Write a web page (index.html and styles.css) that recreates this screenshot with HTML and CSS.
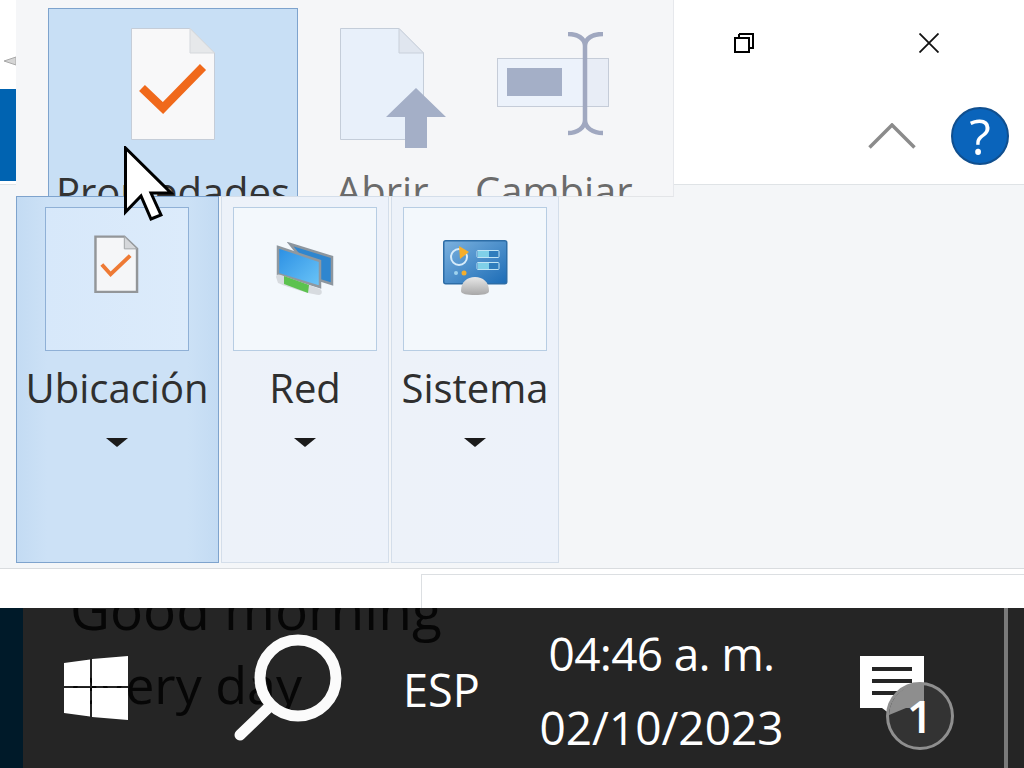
FILE: index.html
```html
<!DOCTYPE html>
<html lang="es">
<head>
<meta charset="utf-8">
<title>Propiedades</title>
<link rel="stylesheet" href="styles.css">
</head>
<body>
<div class="screen">
  <main class="window">
    <header class="header">
      <div class="rail">
        <svg class="rail-arrow" width="16" height="12" viewBox="0 0 16 12"><path d="M4 6 16 2V10Z" fill="#d5d5d5" stroke="#a9a9a9"/></svg>
        <div class="rail-tab"></div>
      </div>
      <div class="header-main">
        <div class="titlebar">
          <svg class="restore" width="20" height="20" viewBox="0 0 20 20"><path d="M5 1H19V15H15M1 5H15V19H1Z M5 1V5 M15 5" fill="none" stroke="#000" stroke-width="2"/></svg>
          <svg class="close" width="20" height="20" viewBox="0 0 20 20"><path d="M.5.5 19.5 19.5M19.5.5.5 19.5" fill="none" stroke="#111" stroke-width="1.800"/></svg>
        </div>
        <div class="tabbar">
          <svg class="caret" width="48" height="26" viewBox="0 0 48 26"><path d="M1.500 24.500 24 2 46.500 24.500" fill="none" stroke="#8b8b8b" stroke-width="3.500"/></svg>
          <svg class="help" width="58" height="58" viewBox="0 0 58 58"><circle cx="29" cy="29" r="28" fill="#0a64bb" stroke="#104f8f" stroke-width="2"/><text class="help-mark" x="29" y="48" text-anchor="middle">?</text></svg>
        </div>
      </div>
    </header>
    <section class="ribbon"></section>
    <footer class="statusbar"><div class="status-panel"></div></footer>

    <div class="menu-top">
      <div class="big-btn big-btn-active">
        <svg width="84" height="112" viewBox="0 0 84 112"><path d="M.5.5H59L83.500 25V111.500H.5Z" fill="#f8f8f9" stroke="#c5cdd8"/><path d="M59 .5V25H83.500Z" fill="#e6e8ea" stroke="#d5d8dc"/><path d="M11 60 32 80 72 39" fill="none" stroke="#f0691b" stroke-width="8.500"/></svg>
        <span class="big-label">Propiedades</span>
      </div>
      <div class="big-btn big-btn-open">
        <svg class="open-icon" width="108" height="122" viewBox="0 0 108 122"><path d="M.5.5H59L83.500 25V111.500H.5Z" fill="#e8f0fa" stroke="#c4cdd9"/><path d="M59 .5V25H83.500Z" fill="#e0e6ef" stroke="#c9d0da"/><path d="M46 89 76 60 106 89H87V120H65V89Z" fill="#a4afc7"/></svg>
        <span class="big-label big-label-off">Abrir</span>
      </div>
      <div class="big-btn big-btn-rename">
        <svg class="rename-icon" width="114" height="104" viewBox="0 0 114 104"><rect x=".5" y="26.500" width="111" height="48" fill="#e8edf6" stroke="#c5ccd8"/><rect x=".5" y="26.500" width="88" height="48" fill="#ecf2fb" stroke="#c5ccd8"/><rect x="10" y="36" width="55" height="28" fill="#a4afc7"/><path d="M71 2C80 2 88 6 88 14V88C88 96 80 101 71 101M106 2C96 2 88 6 88 14M88 88C88 96 96 101 106 101" fill="none" stroke="#a0a8c0" stroke-width="4.500"/></svg>
        <span class="big-label big-label-off">Cambiar</span>
      </div>
    </div>

    <div class="menu-bottom">
      <div class="tile tile-active">
        <div class="tile-box tile-box-active">
          <svg class="tile-icon tile-icon-doc" width="45" height="59" viewBox="0 0 46 60"><path d="M1.500 1.500H31L44 14V58H1.500Z" fill="#f5f6f8" stroke="#939699" stroke-width="2.500"/><path d="M31 1.500V14H44Z" fill="#d5d7da" stroke="#a2a5a8"/><path d="M8 30 17 40 37 21" fill="none" stroke="#ee7a35" stroke-width="4"/></svg>
        </div>
        <span class="tile-label">Ubicación</span>
        <span class="tile-arrow"></span>
      </div>
      <div class="tile tile-red">
        <div class="tile-box">
          <svg class="tile-icon" width="58" height="55" viewBox="0 0 58 55">
            <defs><linearGradient id="screen" x1="0" y1="0" x2="1" y2="1"><stop offset="0" stop-color="#2a8ee3"/><stop offset="1" stop-color="#6cc6f8"/></linearGradient></defs>
            <path d="M14 2 56 15V42L43 38Z" fill="#2f86cf" stroke="#8d969e" stroke-width="2.500"/>
            <path d="M2 5 44 19V45L2 32Z" fill="url(#screen)" stroke="#8f989f" stroke-width="2.500"/>
            <path d="M0 35C0 32 3 32 5 33L44 47C47 49 46 53 43 53 33 52 8 44 2 41Z" fill="#d7dbdf"/>
            <path d="M8 34 33 43 32 51 8 42Z" fill="#5cc24f"/>
          </svg>
        </div>
        <span class="tile-label">Red</span>
        <span class="tile-arrow"></span>
      </div>
      <div class="tile tile-sys">
        <div class="tile-box">
          <svg class="tile-icon" width="65" height="56" viewBox="0 0 65 56">
            <defs>
              <linearGradient id="panel" x1="0" y1="0" x2="1" y2="1"><stop offset="0" stop-color="#7cb2df"/><stop offset="1" stop-color="#1c6cb6"/></linearGradient>
              <linearGradient id="dome" x1="0" y1="0" x2="0" y2="1"><stop offset="0" stop-color="#e8e8e8"/><stop offset="1" stop-color="#a8a8a8"/></linearGradient>
            </defs>
            <rect x=".75" y=".75" width="63" height="43" rx="2" fill="url(#panel)" stroke="#2d6da6" stroke-width="1.500"/>
            <circle cx="16" cy="17" r="8" fill="none" stroke="#d7ecfa" stroke-width="2"/>
            <path d="M16 6 26 12 17 19Z" fill="#f5ae2b"/>
            <rect x="34" y="10.500" width="22" height="7" rx="1" fill="#2f7dbd" stroke="#bfe4f5"/>
            <rect x="35" y="11" width="11" height="6" fill="#7fd0e8"/>
            <rect x="34" y="22.500" width="22" height="7" rx="1" fill="#2f7dbd" stroke="#bfe4f5"/>
            <rect x="35" y="23" width="11" height="6" fill="#7fd0e8"/>
            <circle cx="13" cy="33" r="2" fill="#9fd3ee"/><circle cx="21" cy="33" r="2.500" fill="#f5ae2b"/>
            <path d="M18 51C18 42 24 37 32 37 40 37 46 42 46 51 46 54 40 55 32 55 24 55 18 54 18 51Z" fill="url(#dome)"/>
          </svg>
        </div>
        <span class="tile-label">Sistema</span>
        <span class="tile-arrow"></span>
      </div>
    </div>

    <svg class="pointer" width="50" height="76" viewBox="0 0 50 76"><path d="M1.500 2V66L17 50 27 73 37 69 27 47H47Z" fill="#fff" stroke="#000" stroke-width="3"/></svg>
  </main>

  <nav class="taskbar">
    <div class="wallpaper-text"><p>Good morning</p><p class="wallpaper-second">every day</p></div>
    <div class="strip"></div>
    <div class="start">
      <svg width="64" height="64" viewBox="0 0 64 64"><path d="M0 7 26 3.500V30H0ZM28 3 64 0V30H28ZM0 32H26V60.500L0 57ZM28 32H64V64L28 61Z" fill="#fff"/></svg>
    </div>
    <div class="search">
      <svg width="108" height="108" viewBox="0 0 108 108"><circle cx="64" cy="44" r="38" fill="none" stroke="#fbfbfb" stroke-width="11"/><path d="M34 74 6 101" fill="none" stroke="#fbfbfb" stroke-width="11" stroke-linecap="round"/></svg>
    </div>
    <div class="lang">ESP</div>
    <div class="clock"><span class="clock-time">04:46 a. m.</span><span class="clock-date">02/10/2023</span></div>
    <div class="notify">
      <svg width="96" height="96" viewBox="0 0 96 96"><path d="M0 0H64V52H36L30 58 22 52H0Z" fill="#fff"/><path d="M12 13H52M12 25H52M12 37H44" stroke="#252525" stroke-width="4"/><circle cx="60" cy="60" r="32.500" fill="#333" stroke="#8f8f8f" stroke-width="3"/><path d="M64 28A32 32 0 0 0 29 59L46 52H64Z" fill="#8e8e8e"/><text class="badge-num" x="60" y="77" text-anchor="middle">1</text></svg>
    </div>
    <div class="show-desktop"></div>
  </nav>
</div>
</body>
</html>
```
FILE: styles.css
```css
* { box-sizing: border-box; }
html, body { margin: 0; height: 100%; overflow: hidden; }
body { font-family: "Open Sans", "Noto Sans", sans-serif; color: #2b2b2b; background: #fff; }
.screen { width: 1024px; height: 768px; display: flex; flex-direction: column; }

.window { position: relative; height: 608px; display: flex; flex-direction: column; background: #fff; overflow: hidden; }
.header { height: 185px; display: flex; border-bottom: 1px solid #dfe3e6; }
.rail { width: 16px; display: flex; flex-direction: column; padding-top: 55px; }
.rail-arrow { display: block; }
.rail-tab { width: 16px; height: 92px; margin-top: 22px; background: #0063b1; }
.header-main { flex: 1; display: flex; flex-direction: column; }
.titlebar { height: 84px; display: flex; align-items: flex-start; padding-top: 33px; }
.restore { margin-left: 718px; }
.close { margin-left: 165px; }
.tabbar { flex: 1; display: flex; align-items: flex-start; padding-left: 852px; padding-top: 23px; }
.caret { margin-top: 16px; }
.help { margin-left: 35px; }
.help-mark { font-family: "Open Sans", sans-serif; font-size: 50px; fill: #fff; }

.ribbon { flex: 1; background: #f4f6f8; border-bottom: 1px solid #d9dcdf; }
.statusbar { height: 39px; padding: 5px 0 0 421px; }
.status-panel { height: 100%; border: 1px solid #dcdfe2; border-width: 1px 0 0 1px; }

.menu-top { position: absolute; left: 16px; top: 0; width: 658px; height: 197px; padding: 8px 0 0 32px; display: flex; background: #f5f6f8; border-right: 1px solid #e6e8ec; border-bottom: 1px solid #e3e5e8; overflow: hidden; }
.big-btn { position: relative; flex: none; height: 188px; display: flex; flex-direction: column; align-items: center; }
.big-btn-active { width: 250px; padding-top: 19px; background: #c8dff5; border: 1px solid #7ea3cd; border-bottom: 0; }
.big-btn-open { width: 160px; padding-top: 20px; margin-left: 2px; align-items: flex-start; padding-left: 40px; }
.big-btn-rename { width: 170px; padding-top: 24px; margin-left: 10px; align-items: flex-start; padding-left: 27px; }
.big-label { position: absolute; top: 156px; font-size: 40px; line-height: 54px; white-space: nowrap; color: #333; }
.big-label-off { color: #6b6b6b; }
.big-btn-open .big-label { left: 36px; }
.big-btn-rename .big-label { left: 5px; }

.menu-bottom { position: absolute; left: 16px; top: 196px; display: flex; gap: 2px; align-items: flex-start; }
.tile { width: 168px; height: 367px; padding-top: 10px; display: flex; flex-direction: column; align-items: center; background: linear-gradient(90deg, #edf2f9, #edf2fa); border: 1px solid #d4deea; }
.tile-active { width: 203px; padding-right: 1px; background: linear-gradient(90deg, #c3dbf3, #cce1f6 15%, #cce1f6 85%, #c3dbf3); border-color: #7ea3cd; }
.tile-box { width: 144px; height: 144px; display: flex; justify-content: center; padding-top: 27px; background: #f3f8fc; border: 1px solid #b7cde3; }
.tile-box-active { padding-right: 2px; background: linear-gradient(90deg, #d7e8fa, #dcebfb); border-color: #8fb0d6; }
.tile-red .tile-box { padding-top: 34px; }
.tile-sys .tile-box { padding-top: 32px; }
.tile-label { margin-top: 9px; font-size: 40px; line-height: 56px; white-space: nowrap; color: #2f2f2f; }
.tile-arrow { margin-top: 22px; width: 0; height: 0; border-left: 11px solid transparent; border-right: 11px solid transparent; border-top: 9px solid #1b1b1b; }

.pointer { position: absolute; left: 124px; top: 146px; }

.taskbar { position: relative; height: 160px; display: flex; background: #252525; color: #fff; overflow: hidden; }
.wallpaper-text { position: absolute; left: 70px; top: -37px; color: #060606; font-size: 55px; line-height: 75px; white-space: nowrap; }
.wallpaper-text p { margin: 0; }
.wallpaper-text .wallpaper-second { font-size: 52px; }
.strip { width: 23px; background: #001a29; }
.start { position: relative; margin-left: 41px; margin-top: 48px; height: 64px; }
.search { position: relative; margin-left: 106px; margin-top: 26px; height: 108px; }
.lang { position: relative; margin-left: 61px; margin-top: 54px; font-size: 45px; line-height: 56px; height: 56px; width: 74px; white-space: nowrap; }
.clock { position: relative; margin-left: 63px; width: 243px; display: flex; flex-direction: column; align-items: center; font-size: 46px; line-height: 74px; margin-top: 8px; white-space: nowrap; }
.clock-time { letter-spacing: -.7px; }
.notify { position: relative; margin-left: 77px; margin-top: 48px; height: 96px; }
.badge-num { font-family: "Open Sans", sans-serif; font-size: 46px; font-weight: 600; fill: #fff; }
.show-desktop { position: absolute; left: 1004px; top: 0; width: 4px; height: 160px; background: #7a7a7a; }
```
